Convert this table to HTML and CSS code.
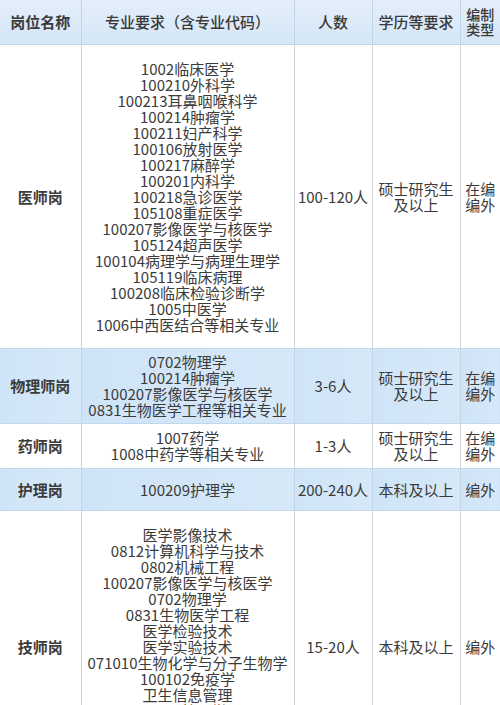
FILE: index.html
```html
<!DOCTYPE html>
<html lang="zh-CN">
<head>
<meta charset="utf-8">
<link rel="stylesheet" href="styles.css">
</head>
<body>
<table class="jobs">
  <colgroup>
    <col class="c-name">
    <col class="c-major">
    <col class="c-num">
    <col class="c-edu">
    <col class="c-type">
  </colgroup>
  <thead>
    <tr class="head">
      <th class="h-name">岗位名称</th>
      <th>专业要求（含专业代码）</th>
      <th>人数</th>
      <th>学历等要求</th>
      <th class="h-type">编制<br>类型</th>
    </tr>
  </thead>
  <tbody>
    <tr class="row white r1">
      <td class="name">医师岗</td>
      <td class="major">1002临床医学<br>100210外科学<br>100213耳鼻咽喉科学<br>100214肿瘤学<br>100211妇产科学<br>100106放射医学<br>100217麻醉学<br>100201内科学<br>100218急诊医学<br>105108重症医学<br>100207影像医学与核医学<br>105124超声医学<br>100104病理学与病理生理学<br>105119临床病理<br>100208临床检验诊断学<br>1005中医学<br>1006中西医结合等相关专业</td>
      <td class="num">100-120人</td>
      <td class="edu">硕士研究生<br>及以上</td>
      <td class="type">在编<br>编外</td>
    </tr>
    <tr class="row blue r2">
      <td class="name">物理师岗</td>
      <td class="major">0702物理学<br>100214肿瘤学<br>100207影像医学与核医学<br>0831生物医学工程等相关专业</td>
      <td class="num">3-6人</td>
      <td class="edu">硕士研究生<br>及以上</td>
      <td class="type">在编<br>编外</td>
    </tr>
    <tr class="row white r3">
      <td class="name">药师岗</td>
      <td class="major">1007药学<br>1008中药学等相关专业</td>
      <td class="num">1-3人</td>
      <td class="edu">硕士研究生<br>及以上</td>
      <td class="type">在编<br>编外</td>
    </tr>
    <tr class="row blue r4">
      <td class="name">护理岗</td>
      <td class="major">100209护理学</td>
      <td class="num">200-240人</td>
      <td class="edu">本科及以上</td>
      <td class="type">编外</td>
    </tr>
    <tr class="row white r5">
      <td class="name">技师岗</td>
      <td class="major">医学影像技术<br>0812计算机科学与技术<br>0802机械工程<br>100207影像医学与核医学<br>0702物理学<br>0831生物医学工程<br>医学检验技术<br>医学实验技术<br>071010生物化学与分子生物学<br>100102免疫学<br>卫生信息管理<br>1011护理学<br>1007药学<br>0710生物学<br>等相关专业</td>
      <td class="num">15-20人</td>
      <td class="edu">本科及以上</td>
      <td class="type">编外</td>
    </tr>
  </tbody>
</table>
</body>
</html>
```

FILE: styles.css
```css
html, body {
  margin: 0;
  padding: 0;
  background: #ffffff;
}

body {
  font-family: "Noto Sans CJK SC", "Noto Sans", sans-serif;
  color: #333333;
  overflow: hidden;
}

.jobs {
  width: 500px;
  border-collapse: collapse;
  table-layout: fixed;
}

.c-name { width: 81px; }
.c-major { width: 213px; }
.c-num { width: 78px; }
.c-edu { width: 88px; }
.c-type { width: 40px; }

.jobs th,
.jobs td {
  padding: 0 2px;
  text-align: center;
  vertical-align: middle;
  border-left: 1px solid #cdd3d9;
  font-size: 15px;
  line-height: 16px;
}

.jobs th:first-child,
.jobs td:first-child {
  border-left: none;
}

.head th {
  height: 44px;
  font-weight: 500;
  color: #3a3a3a;
  background: linear-gradient(180deg, #e4eefa 0%, #d4e6f7 100%);
  border-bottom: 1px solid #c3d6e8;
  border-left-color: #c2d4e6;
}

.head .h-name {
  font-weight: 700;
}

.head .h-type {
  font-size: 14px;
  line-height: 15px;
  padding: 0;
}

.row td {
  color: #3b3b3b;
}

.name {
  font-weight: 700;
}

.type {
  padding: 0;
}

.blue td {
  background: linear-gradient(90deg, #cfe4f8 0%, #d6e8f8 100%);
  border-left-color: #c3d5e6;
}

.blue {
  border-top: 1px solid #c2d8ec;
  border-bottom: 1px solid #c2d8ec;
}

.r1 td { height: 303px; }
.r2 td { height: 74px; }
.r3 td { height: 44px; }
.r4 td { height: 41px; }
.r5 td { height: 272px; }
```
